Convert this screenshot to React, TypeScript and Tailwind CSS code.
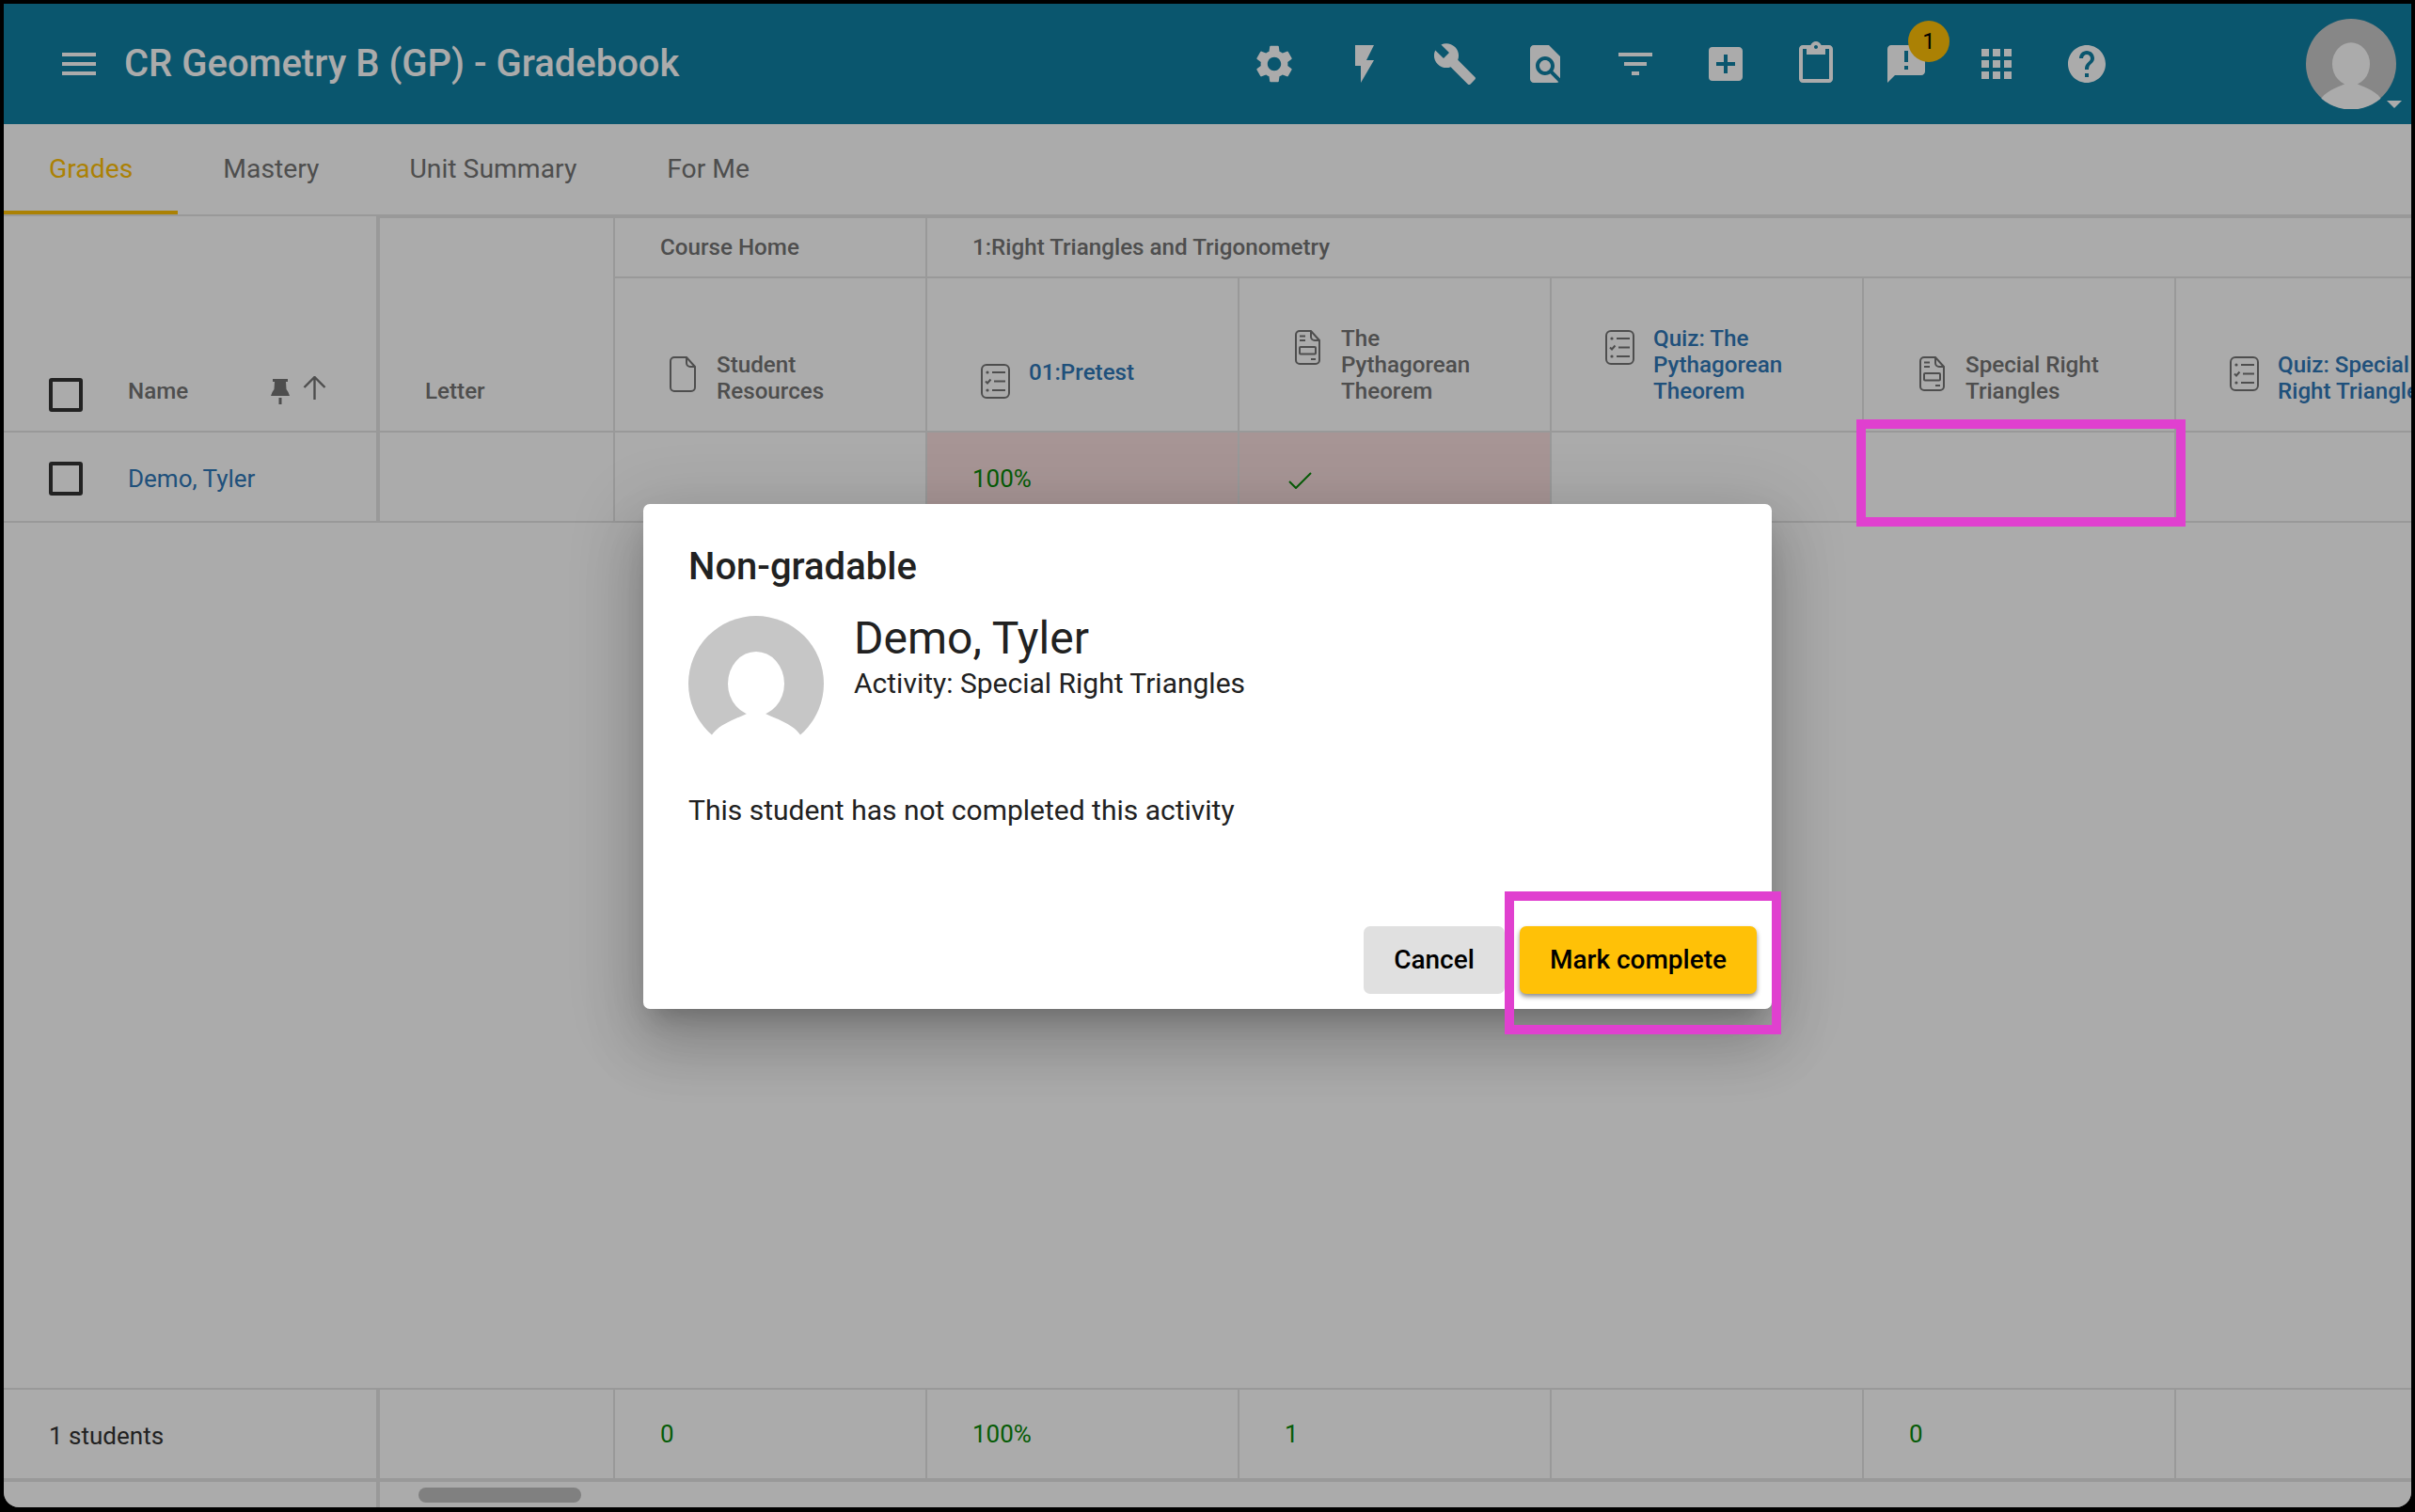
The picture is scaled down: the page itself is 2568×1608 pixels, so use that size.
import {
  MdAddBox,
  MdAnnouncement,
  MdApps,
  MdBuild,
  MdContentPaste,
  MdFilterList,
  MdFindInPage,
  MdFlashOn,
  MdHelp,
  MdMenu,
  MdSettings,
} from 'react-icons/md'

const toolbar = [MdSettings, MdFlashOn, MdBuild, MdFindInPage, MdFilterList, MdAddBox, MdContentPaste, MdAnnouncement, MdApps, MdHelp]
const tabs = ['Grades', 'Mastery', 'Unit Summary', 'For Me']
const cols = 'grid grid-cols-[400px_250px_332px_332px_332px_332px_332px_332px] w-[2642px]'

function Avatar({ size, fill }: { size: string; fill: string }) {
  return (
    <svg viewBox="0 0 144 144" className={`${size} shrink-0`}>
      <clipPath id="avatar-clip">
        <circle cx="72" cy="72" r="72.8" />
      </clipPath>
      <circle cx="72" cy="72" r="72" fill={fill} />
      <g clipPath="url(#avatar-clip)" fill="#fff">
        <ellipse cx="72" cy="72" rx="30" ry="34" />
        <path d="M62 98 L62 104 C50 110 28 116 22 132 L20 146 L124 146 L122 132 C116 116 94 110 82 104 L82 98 Z" />
      </g>
    </svg>
  )
}

function PlainDoc() {
  return (
    <svg width="28" height="38" viewBox="0 0 28 38" fill="none" stroke="#757575" strokeWidth="2">
      <path d="M5 1H18L27 11V33a4 4 0 0 1-4 4H5a4 4 0 0 1-4-4V5a4 4 0 0 1 4-4Z" />
      <path d="M18 1V7a4 4 0 0 0 4 4H27" />
    </svg>
  )
}

function PageDoc() {
  return (
    <svg width="27" height="37" viewBox="0 0 27 37" fill="none" stroke="#757575" strokeWidth="2">
      <path d="M5 1H17L26 11V32a4 4 0 0 1-4 4H5a4 4 0 0 1-4-4V5a4 4 0 0 1 4-4Z" />
      <path d="M17 1V7a4 4 0 0 0 4 4H26" />
      <path d="M5 6.5h6M5 11h6M17 31h5" />
      <rect x="5" y="18" width="17" height="7.5" rx="1" />
    </svg>
  )
}

function QuizDoc() {
  return (
    <svg width="31" height="37" viewBox="0 0 31 37" fill="none" stroke="#757575" strokeWidth="2">
      <rect x="1" y="1" width="29" height="35" rx="5" />
      <path d="M12 9h14M14 18.5h12M12 28h14" />
      <path d="M5 18.5l2 2 3.5-4" />
      <circle cx="7" cy="9" r="1.6" fill="#757575" stroke="none" />
      <circle cx="7" cy="28" r="1.6" fill="#757575" stroke="none" />
    </svg>
  )
}

function Activity({ kind, link, lines, col }: { kind: 'plain' | 'page' | 'quiz'; link?: boolean; lines: string[]; col: string }) {
  return (
    <div className={`${col} row-start-2 flex items-end border-r-2 border-b-2 border-[#e4e4e4] pl-[48px] pb-[28px]`}>
      <div className="flex items-start min-h-[48px]">
        <div className="w-[48px] mr-[12px] pt-[5px] flex justify-center shrink-0">
          {kind === 'plain' && <PlainDoc />}
          {kind === 'page' && <PageDoc />}
          {kind === 'quiz' && <QuizDoc />}
        </div>
        <div className={`text-[24.2px] leading-[28px] font-medium whitespace-nowrap ${link ? 'text-[#2f78b8]' : 'text-[#757575]'}`}>
          {lines.map(l => <div key={l}>{l}</div>)}
        </div>
      </div>
    </div>
  )
}

function Checkbox() {
  return <div className="w-[36px] h-[36px] rounded-[3px] border-[4px] border-[#333] shrink-0" />
}

function Cell({ children, extra }: { children?: React.ReactNode; extra?: string }) {
  return <div className={`h-full border-r-2 border-[#e4e4e4] pl-[48px] text-[26px] text-[#0a8a0a] ${extra ?? ''}`}>{children}</div>
}

export default function App() {
  return (
    <div className="w-[2568px] h-[1608px] bg-black pt-[4px] pl-[4px] pr-[4px] pb-[5px] font-['Roboto',sans-serif]">
      <div className="relative w-full h-full bg-white flex flex-col overflow-hidden rounded-b-[16px]">

        {/* HEADER */}
        <div className="h-[128px] shrink-0 bg-[#0f80a4] flex items-center text-white">
          <div className="w-[1303px] shrink-0 flex items-center pl-[56px]">
            <MdMenu size={48} />
            <span className="ml-[24px] text-[40px] font-medium">CR Geometry B (GP) - Gradebook</span>
          </div>
          {toolbar.map((Icon, i) => (
            <div key={i} className="relative w-[96px] flex justify-center">
              <Icon size={48} />
              {i === 7 && (
                <div className="absolute left-[50px] top-[-22px] w-[44px] h-[44px] rounded-full bg-[#ffc107] text-black text-[24px] flex items-center justify-center">1</div>
              )}
            </div>
          ))}
          <div className="relative ml-[185px]">
            <Avatar size="w-[96px] h-[96px]" fill="#cacaca" />
            <div className="absolute left-[86px] top-[87px] w-0 h-0 border-l-[8px] border-r-[8px] border-t-[8px] border-l-transparent border-r-transparent border-t-white" />
          </div>
        </div>

        {/* TABS */}
        <div className="h-[98px] shrink-0 flex border-b-2 border-[#e4e4e4] text-[28.3px]">
          {tabs.map((t, i) => (
            <div key={t} className={`px-[48px] flex items-center h-[96px] ${i === 0 ? 'text-[#ffc107] border-b-[4px] border-[#ffc107]' : 'text-[#757575]'}`}>
              <span className={i === 0 ? 'mt-[4px]' : ''}>{t}</span>
            </div>
          ))}
        </div>

        {/* TABLE HEAD */}
        <div className={`${cols} shrink-0 grid-rows-[66px_164px]`}>
          <div className="col-start-1 row-start-1 row-span-2 border-r-[4px] border-b-2 border-[#e4e4e4] flex items-end pl-[48px] pb-[20px]">
            <Checkbox />
            <span className="ml-[48px] w-[152px] mb-[8px] text-[24.2px] leading-[28px] font-medium text-[#757575]">Name</span>
            <svg width="20" height="28" viewBox="0 0 20 28" fill="#757575" className="mb-[7px]">
              <path d="M2 0H18V3H16L16.5 11Q19 14 20 18H0Q1 14 3.5 11L4 3H2Z" />
              <rect x="8.5" y="20" width="3" height="7" />
            </svg>
            <svg width="25" height="25" viewBox="0 0 25 25" fill="none" stroke="#757575" strokeWidth="2.4" className="ml-[14px] mb-[13px]">
              <path d="M12.5 1V25M1.5 12L12.5 1L23.5 12" />
            </svg>
          </div>
          <div className="col-start-2 row-start-1 row-span-2 border-r-2 border-t-2 border-b-2 border-[#e4e4e4] flex items-end pl-[48px] pb-[28px]">
            <span className="text-[24.2px] leading-[28px] font-medium text-[#757575]">Letter</span>
          </div>
          <div className="col-start-3 row-start-1 border-r-2 border-t-2 border-b-2 border-[#e4e4e4] flex items-center pl-[48px] text-[24.2px] font-medium text-[#757575]">Course Home</div>
          <div className="col-start-4 col-span-5 row-start-1 border-t-2 border-b-2 border-[#e4e4e4] flex items-center pl-[48px] text-[24.2px] font-medium text-[#757575]">1:Right Triangles and Trigonometry</div>
          <Activity col="col-start-3" kind="plain" lines={['Student', 'Resources']} />
          <Activity col="col-start-4" kind="quiz" link lines={['01:Pretest']} />
          <Activity col="col-start-5" kind="page" lines={['The', 'Pythagorean', 'Theorem']} />
          <Activity col="col-start-6" kind="quiz" link lines={['Quiz: The', 'Pythagorean', 'Theorem']} />
          <Activity col="col-start-7" kind="page" lines={['Special Right', 'Triangles']} />
          <Activity col="col-start-8" kind="quiz" link lines={['Quiz: Special', 'Right Triangles']} />
        </div>

        {/* STUDENT ROW */}
        <div className={`${cols} shrink-0 h-[96px] border-b-2 border-[#e4e4e4]`}>
          <div className="h-full border-r-[4px] border-[#e4e4e4] pl-[48px] pt-[31px] flex items-start">
            <Checkbox />
            <span className="ml-[48px] mt-[4px] text-[26px] leading-[28px] text-[#2f78b8]">Demo, Tyler</span>
          </div>
          <Cell />
          <Cell />
          <Cell extra="bg-[#f9dfdf] pt-[35px] leading-[28px]">100%</Cell>
          <Cell extra="bg-[#f9dfdf] pt-[42px]">
            <svg width="25" height="18" viewBox="0 0 25 18" fill="none" stroke="#0a8a0a" strokeWidth="2" className="ml-[4px]">
              <path d="M1 10L8 17L24 1" />
            </svg>
          </Cell>
          <Cell />
          <Cell />
          <Cell />
        </div>

        <div className="flex-1" />

        {/* FOOTER */}
        <div className={`${cols} shrink-0 h-[100px] border-t-2 border-b-[4px] border-[#e4e4e4] items-center`}>
          <div className="h-full border-r-[4px] border-[#e4e4e4] pl-[48px] pt-[35px] text-[26px] leading-[28px] text-[#333]">1 students</div>
          <Cell />
          <Cell extra="pt-[33px] leading-[28px]">0</Cell>
          <Cell extra="pt-[33px] leading-[28px]">100%</Cell>
          <Cell extra="pt-[33px] leading-[28px]">1</Cell>
          <Cell />
          <Cell extra="pt-[33px] leading-[28px]">0</Cell>
          <Cell />
        </div>

        {/* SCROLLBAR */}
        <div className="h-[27px] shrink-0 flex">
          <div className="w-[400px] h-full border-r-[4px] border-[#e4e4e4]" />
          <div className="ml-[41px] mt-[6px] w-[173px] h-[16px] rounded-[8px] bg-[#bfbfbf]" />
        </div>

        {/* DIALOG */}
        <div className="absolute inset-0 pt-[2px] bg-black/33 flex items-center justify-center">
          <div className="w-[1200px] h-[537px] bg-white rounded-[7px] flex flex-col px-[48px] pt-[45px] pb-[16px] pr-[16px] text-[#212121] shadow-[0_18px_25px_-11px_rgba(0,0,0,0.2),0_39px_62px_5px_rgba(0,0,0,0.14),0_15px_75px_13px_rgba(0,0,0,0.12)]">
            <div className="text-[40px] leading-[44px] font-medium">Non-gradable</div>
            <div className="mt-[30px] flex items-start">
              <Avatar size="w-[144px] h-[144px]" fill="#c6c6c6" />
              <div className="ml-[32px] -mt-[4px]">
                <div className="text-[48px] leading-[56px]">Demo, Tyler</div>
                <div className="text-[30px] leading-[40px]">Activity: Special Right Triangles</div>
              </div>
            </div>
            <div className="mt-[43px] text-[30px] leading-[40px]">This student has not completed this activity</div>
            <div className="mt-auto flex justify-end gap-[16px]">
              <button className="w-[150px] h-[72px] rounded-[7px] bg-[#e0e0e0] text-black text-[28px] font-medium">Cancel</button>
              <button className="w-[252px] h-[72px] rounded-[7px] bg-[#ffc107] text-black text-[28px] font-medium shadow-[0_3px_5px_rgba(0,0,0,0.45)]">Mark complete</button>
            </div>
          </div>
        </div>

        {/* CALLOUTS */}
        <div className="absolute left-[1970px] top-[442px] w-[350px] h-[114px] border-[10px] border-[#e040cf]" />
        <div className="absolute left-[1596px] top-[944px] w-[294px] h-[152px] border-[10px] border-[#e040cf]" />
      </div>
    </div>
  )
}
